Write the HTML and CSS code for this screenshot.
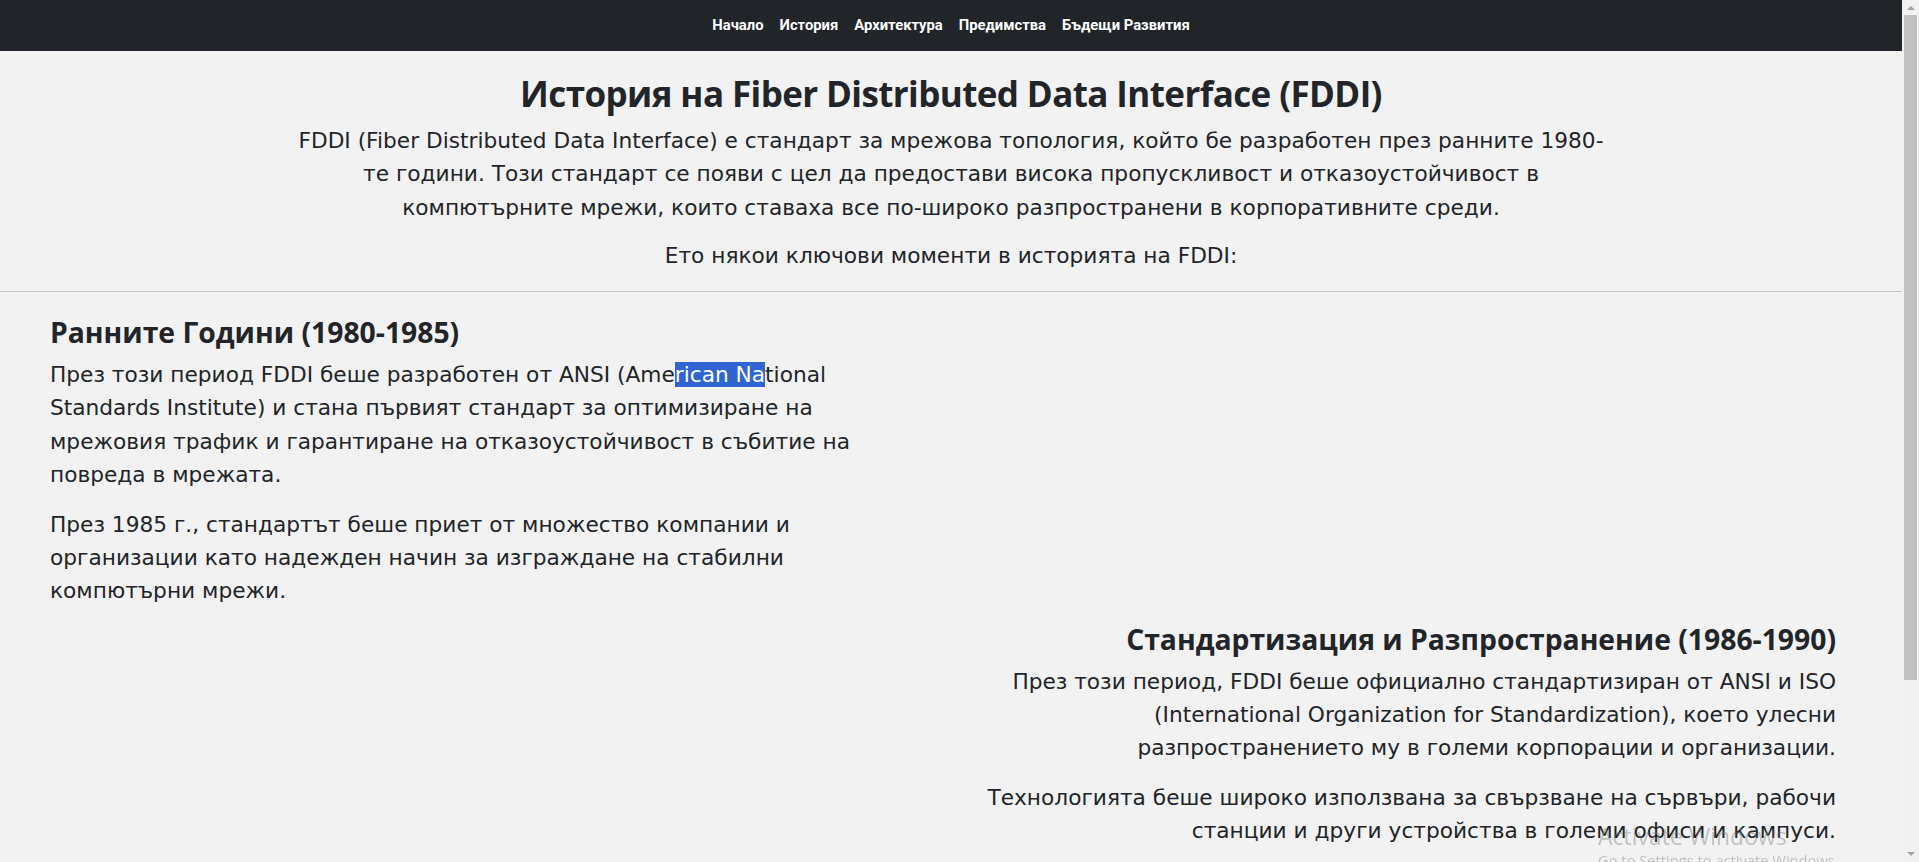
FILE: index.html
```html
<!DOCTYPE html>
<html lang="bg">
<head>
<meta charset="utf-8">
<title>История на FDDI</title>
<link rel="stylesheet" href="styles.css">
</head>
<body>
<nav class="navbar">
  <ul class="nav">
    <li><a href="#">Начало</a></li>
    <li><a href="#">История</a></li>
    <li><a href="#">Архитектура</a></li>
    <li><a href="#">Предимства</a></li>
    <li><a href="#">Бъдещи Развития</a></li>
  </ul>
</nav>
<header class="intro">
  <h1>История на Fiber Distributed Data Interface (FDDI)</h1>
  <p>FDDI (Fiber Distributed Data Interface) е стандарт за мрежова топология, който бе разработен през ранните 1980-те години. Този стандарт се появи с цел да предостави висока пропускливост и отказоустойчивост в компютърните мрежи, които ставаха все по-широко разпространени в корпоративните среди.</p>
  <p class="last">Ето някои ключови моменти в историята на FDDI:</p>
</header>
<section class="timeline">
  <div class="event event-left">
    <h2>Ранните Години (1980-1985)</h2>
    <p>През този период FDDI беше разработен от ANSI (Ame<span class="sel">rican Na</span>tional Standards Institute) и стана първият стандарт за оптимизиране на мрежовия трафик и гарантиране на отказоустойчивост в събитие на повреда в мрежата.</p>
    <p>През 1985 г., стандартът беше приет от множество компании и организации като надежден начин за изграждане на стабилни компютърни мрежи.</p>
  </div>
  <div class="event event-right">
    <h2>Стандартизация и Разпространение (1986-1990)</h2>
    <p>През този период, FDDI беше официално стандартизиран от ANSI и ISO (International Organization for Standardization), което улесни разпространението му в големи корпорации и организации.</p>
    <p>Технологията беше широко използвана за свързване на сървъри, рабочи станции и други устройства в големи офиси и кампуси.</p>
  </div>
</section>
<div class="activate">
  <div class="activate-title">Activate Windows</div>
  <div class="activate-sub">Go to Settings to activate Windows.</div>
</div>
<div class="scrollbar" aria-hidden="true">
  <div class="scroll-arrow scroll-up"></div>
  <div class="scroll-thumb"></div>
  <div class="scroll-arrow scroll-down"></div>
</div>
</body>
</html>
```
FILE: styles.css
```css
html {
  background: #f2f2f2;
}
body {
  margin: 0;
  padding-right: 17px;
  background: #f2f2f2;
  color: #212529;
  font-family: "DejaVu Sans", Verdana, sans-serif;
  font-size: 21.7px;
  line-height: 33.3px;
}
.navbar {
  background: #212529;
  height: 51px;
  display: flex;
  align-items: center;
  justify-content: center;
}
.nav {
  list-style: none;
  margin: 0;
  padding: 0 0 2px;
  display: flex;
}
.nav a {
  display: block;
  padding: 0 8px;
  color: #ffffff;
  text-decoration: none;
  font-family: Roboto, "Liberation Sans", sans-serif;
  font-weight: 700;
  font-size: 14.8px;
  line-height: 20px;
}
.intro {
  text-align: center;
  padding: 21px 0 19px;
  border-bottom: 1px solid #c6c6c6;
}
.intro h1 {
  margin: 0 0 9px;
  font-family: "Open Sans", "Noto Sans", sans-serif;
  font-weight: 700;
  font-size: 35px;
  letter-spacing: -0.6px;
  line-height: 43px;
}
.intro p {
  max-width: 1318px;
  margin: 0 auto 15px;
}
.intro p.last {
  margin-bottom: 0;
}
.timeline {
  display: flex;
  flex-direction: column;
  gap: 14px;
  padding: 23px 66px 240px 50px;
}
.event-left {
  width: 820px;
}
.event-right {
  width: 880px;
  align-self: flex-end;
  text-align: right;
}
.event h2 {
  margin: 0 0 9px;
  font-family: "Open Sans", "Noto Sans", sans-serif;
  font-weight: 700;
  font-size: 28.3px;
  line-height: 34px;
}
.event p {
  margin: 0 0 16.5px;
}
.event p:last-child {
  margin-bottom: 0;
}
.sel {
  background: #2f64d1;
  color: #ffffff;
}
.activate {
  position: fixed;
  left: 1598px;
  top: 822px;
  color: rgba(120, 120, 120, 0.4);
  font-family: "Open Sans", sans-serif;
  white-space: nowrap;
}
.activate-title {
  font-size: 23px;
  line-height: 29px;
}
.activate-sub {
  font-size: 14.7px;
  line-height: 18px;
}
.scrollbar {
  position: fixed;
  top: 0;
  right: 0;
  width: 17px;
  height: 100vh;
  background: #f1f1f1;
  display: flex;
  flex-direction: column;
  align-items: center;
}
.scroll-arrow {
  width: 0;
  height: 0;
  border-left: 4px solid transparent;
  border-right: 4px solid transparent;
}
.scroll-up {
  margin: 6px 0 5px;
  border-bottom: 4px solid #a3a3a3;
}
.scroll-down {
  margin-top: auto;
  margin-bottom: 6px;
  border-top: 4px solid #a3a3a3;
}
.scroll-thumb {
  width: 13px;
  height: 665px;
  background: #c1c1c1;
}
```
